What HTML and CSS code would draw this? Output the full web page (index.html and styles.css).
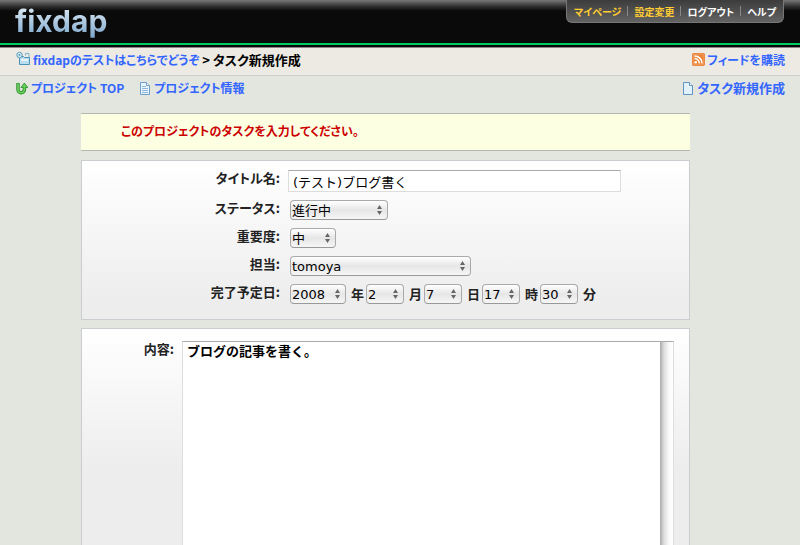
FILE: index.html
```html
<!DOCTYPE html>
<html lang="ja">
<head>
  <meta charset="UTF-8">
  <meta name="viewport" content="width=device-width, initial-scale=1.0">
  <title>タスク新規作成 - fixdap</title>
  <link rel="stylesheet" href="styles.css">
</head>
<body>

  <header class="header">
    <a href="#" class="logo">fixdap</a>
    <nav class="user-menu">
      <a href="#" class="active">マイページ</a>
      <a href="#" class="active">設定変更</a>
      <a href="#">ログアウト</a>
      <a href="#">ヘルプ</a>
    </nav>
  </header>

  <div class="bar breadcrumb">
    <div class="bar-group">
      <span class="crumbs">
        <svg class="icon" width="14" height="15" viewBox="0 0 14 15">
          <path d="M3.500 5.500h4l1 1h5v7h-10z" fill="#b9dcee" stroke="#4b93b8"/>
          <path d="M5 9h7" stroke="#e6f4fa" stroke-width="2"/>
          <circle cx="3.500" cy="4" r="2.700" fill="#dceef6" stroke="#5a9dbc"/>
          <circle cx="3.500" cy="4" r="1" fill="#5a9dbc"/>
          <path d="M9.500 4.500V2.500h3.500V6" fill="none" stroke="#7fb5cf"/>
        </svg>
        <a href="#">fixdapのテストはこちらでどうぞ</a> &gt; タスク新規作成
      </span>
    </div>
    <a href="#" class="icon-link">
      <svg class="icon" width="13" height="13" viewBox="0 0 13 13">
        <rect width="13" height="13" rx="2" fill="#e06c20"/>
        <rect x="1" y="1" width="11" height="11" rx="1" fill="#ec8438" stroke="#f4a469"/>
        <circle cx="3.700" cy="9.300" r="1.300" fill="#fff"/>
        <path d="M2.500 5.600a4.900 4.900 0 0 1 4.900 4.900M2.500 2.900a7.600 7.600 0 0 1 7.600 7.600" fill="none" stroke="#fff" stroke-width="1.500"/>
      </svg>
      フィードを購読
    </a>
  </div>

  <div class="bar subnav">
    <div class="bar-group">
      <a href="#" class="icon-link">
        <svg class="icon" width="12" height="13" viewBox="0 0 12 13">
          <path d="M2 1v6.500a3.200 3.200 0 0 0 6.400 0V5" fill="none" stroke="#268a26" stroke-width="3.400"/>
          <path d="M4.900 5.500L8.400 1L11.800 5.500z" fill="#67cf5c" stroke="#268a26" stroke-width=".8"/>
          <path d="M2 1.600v5.900a3.200 3.200 0 0 0 6.400 0V4" fill="none" stroke="#67cf5c" stroke-width="1.800"/>
        </svg>
        プロジェクト TOP
      </a>
      <a href="#" class="icon-link">
        <svg class="icon" width="12" height="13" viewBox="0 0 12 13">
          <path d="M1.500.5h6l3 3v9h-9z" fill="#e8f4fd" stroke="#6fa0c8"/>
          <path d="M7.500.5v3h3" fill="#fff" stroke="#6fa0c8"/>
          <path d="M3 4.500h4M3 6.500h6M3 8.500h6M3 10.500h6" stroke="#8fb7da"/>
        </svg>
        プロジェクト情報
      </a>
    </div>
    <a href="#" class="icon-link new-task">
      <svg class="icon" width="12" height="13" viewBox="0 0 12 13">
        <path d="M1.500.5h6l3 3v9h-9z" fill="#e2f2fd" stroke="#5f96c4"/>
        <path d="M7.500.5v3h3" fill="#fff" stroke="#5f96c4"/>
      </svg>
      タスク新規作成
    </a>
  </div>

  <main class="content">
    <p class="notice">このプロジェクトのタスクを入力してください。</p>

    <form>
      <div class="panel fields">
        <div class="row">
          <label for="title">タイトル名:</label>
          <div><input type="text" id="title" class="title-input" value="(テスト)ブログ書く"></div>
        </div>
        <div class="row">
          <label for="status">ステータス:</label>
          <div class="controls">
            <select id="status" class="w-status"><option>進行中</option></select>
          </div>
        </div>
        <div class="row">
          <label for="priority">重要度:</label>
          <div class="controls">
            <select id="priority" class="w-priority"><option>中</option></select>
          </div>
        </div>
        <div class="row">
          <label for="owner">担当:</label>
          <div class="controls">
            <select id="owner" class="w-owner"><option>tomoya</option></select>
          </div>
        </div>
        <div class="row">
          <label for="year">完了予定日:</label>
          <div class="controls">
            <select id="year" class="w-year"><option>2008</option></select>
            <label for="year">年</label>
            <select id="month"><option>2</option></select>
            <label for="month">月</label>
            <select id="day"><option>7</option></select>
            <label for="day">日</label>
            <select id="hour"><option>17</option></select>
            <label for="hour">時</label>
            <select id="minute"><option>30</option></select>
            <label for="minute">分</label>
          </div>
        </div>
      </div>

      <div class="panel body-panel">
        <label for="body">内容:</label>
        <textarea id="body" rows="16">ブログの記事を書く。</textarea>
      </div>
    </form>
  </main>

</body>
</html>
```
FILE: styles.css
```css
* {
  box-sizing: border-box;
}
body {
  margin: 0;
  background: #e3e5df;
  color: #222;
  font-family: "Noto Sans CJK JP", sans-serif;
  font-size: 13px;
  font-weight: bold;
  font-feature-settings: "palt";
  line-height: 18px;
}
a {
  color: #3366ff;
  text-decoration: none;
}

/* header */
.header {
  display: flex;
  justify-content: space-between;
  align-items: flex-start;
  height: 48px;
  padding: 0 16px 0 15px;
  background:
    linear-gradient(#00cc66, #00cc66) 0 43px / 100% 2px no-repeat,
    linear-gradient(#777 0, #333 6px, #0a0a0a 11px);
  border-bottom: 1px solid #8a8085;
}
.logo {
  font-family: Inter, sans-serif;
  font-size: 30px;
  font-weight: 700;
  line-height: 42px;
  background: linear-gradient(#d8e6f2 8px, #7ba6cc 38px);
  -webkit-background-clip: text;
  background-clip: text;
  color: transparent;
}
.user-menu {
  display: flex;
  height: 23px;
  padding: 6px 1px;
  background: linear-gradient(#3c3c3c, #636363);
  border: 1px solid #777;
  border-top: 0;
  border-radius: 0 0 6px 6px;
  font-size: 10px;
  line-height: 11px;
}
.user-menu a {
  padding: 0 6px;
  color: #fff;
}
.user-menu a + a {
  border-left: 1px solid #888;
}
.user-menu a.active {
  color: #ffcc33;
}

/* bars under the header */
.bar {
  display: flex;
  justify-content: space-between;
  padding: 3px 15px 6px 16px;
}
.bar a {
  font-size: 12px;
}
.bar .new-task {
  font-size: 13px;
}
.bar-group {
  display: flex;
  gap: 15px;
}
.breadcrumb {
  background: #edeae3;
  border-bottom: 1px solid #cfcfc9;
  color: #000;
}
.icon {
  vertical-align: -1px;
}
.subnav .icon {
  vertical-align: -2px;
}

/* form */
.content {
  margin: 10px 110px 0 81px;
}
.notice {
  margin: 0 0 9px;
  padding: 8px 40px 10px;
  background: #fdffe3;
  border-top: 1px solid #b5b7b2;
  border-bottom: 1px solid #b5b7b2;
  color: #cc0000;
  font-size: 12px;
}
.panel {
  margin-bottom: 8px;
  border: 1px solid #c9ccd0;
  background: #ededed linear-gradient(#fff, #ededed 142px) no-repeat;
}
.fields {
  display: flex;
  flex-direction: column;
  gap: 8px;
  padding: 9px 0 15px;
}
.row {
  display: grid;
  grid-template-columns: 198px 1fr;
  gap: 8px;
}
.row > label,
.body-panel > label {
  line-height: 16px;
  text-align: right;
}
.controls {
  display: flex;
  align-items: center;
  padding-left: 2px;
}
.controls label {
  margin: 0 2px 0 5px;
}
.title-input {
  display: block;
  width: 333px;
  max-width: 100%;
  height: 22px;
  padding: 0 4px;
  border: 1px solid #ddd;
  border-top-color: #aaa;
  background: #fff;
  color: #000;
  font: 13px "DejaVu Sans", "Noto Sans CJK JP", sans-serif;
}
select {
  appearance: none;
  width: 38px;
  height: 20px;
  padding: 0 0 0 1px;
  border: 1px solid #aaa;
  border-bottom-color: #999;
  border-radius: 4px;
  background:
    url("data:image/svg+xml,%3Csvg xmlns='http://www.w3.org/2000/svg' width='5' height='10'%3E%3Cpath d='M0 4l2.500-4L5 4zM0 6h5l-2.500 4z' fill='%23666'/%3E%3C/svg%3E") right 5px center no-repeat,
    linear-gradient(#fff, #e6e6e6 50%, #f6f6f6);
  color: #000;
  font: 13px "DejaVu Sans", "Noto Sans CJK JP", sans-serif;
}
.w-status {
  width: 98px;
}
.w-priority {
  width: 46px;
}
.w-owner {
  width: 181px;
}
.w-year {
  width: 56px;
}
.body-panel {
  display: grid;
  grid-template-columns: 92px 1fr;
  gap: 8px;
  padding: 12px 15px 15px 0;
}
textarea {
  display: block;
  width: 100%;
  padding: 0 17px 0 4px;
  border: 1px solid #ddd;
  border-top-color: #aaa;
  resize: none;
  background: #fff linear-gradient(to right, #aaa, #ddd 4px, #fafafa 9px, #fff) right / 13px 100% no-repeat;
  color: #000;
  font: bold 13px/18px "Noto Sans CJK JP", sans-serif;
}
```
